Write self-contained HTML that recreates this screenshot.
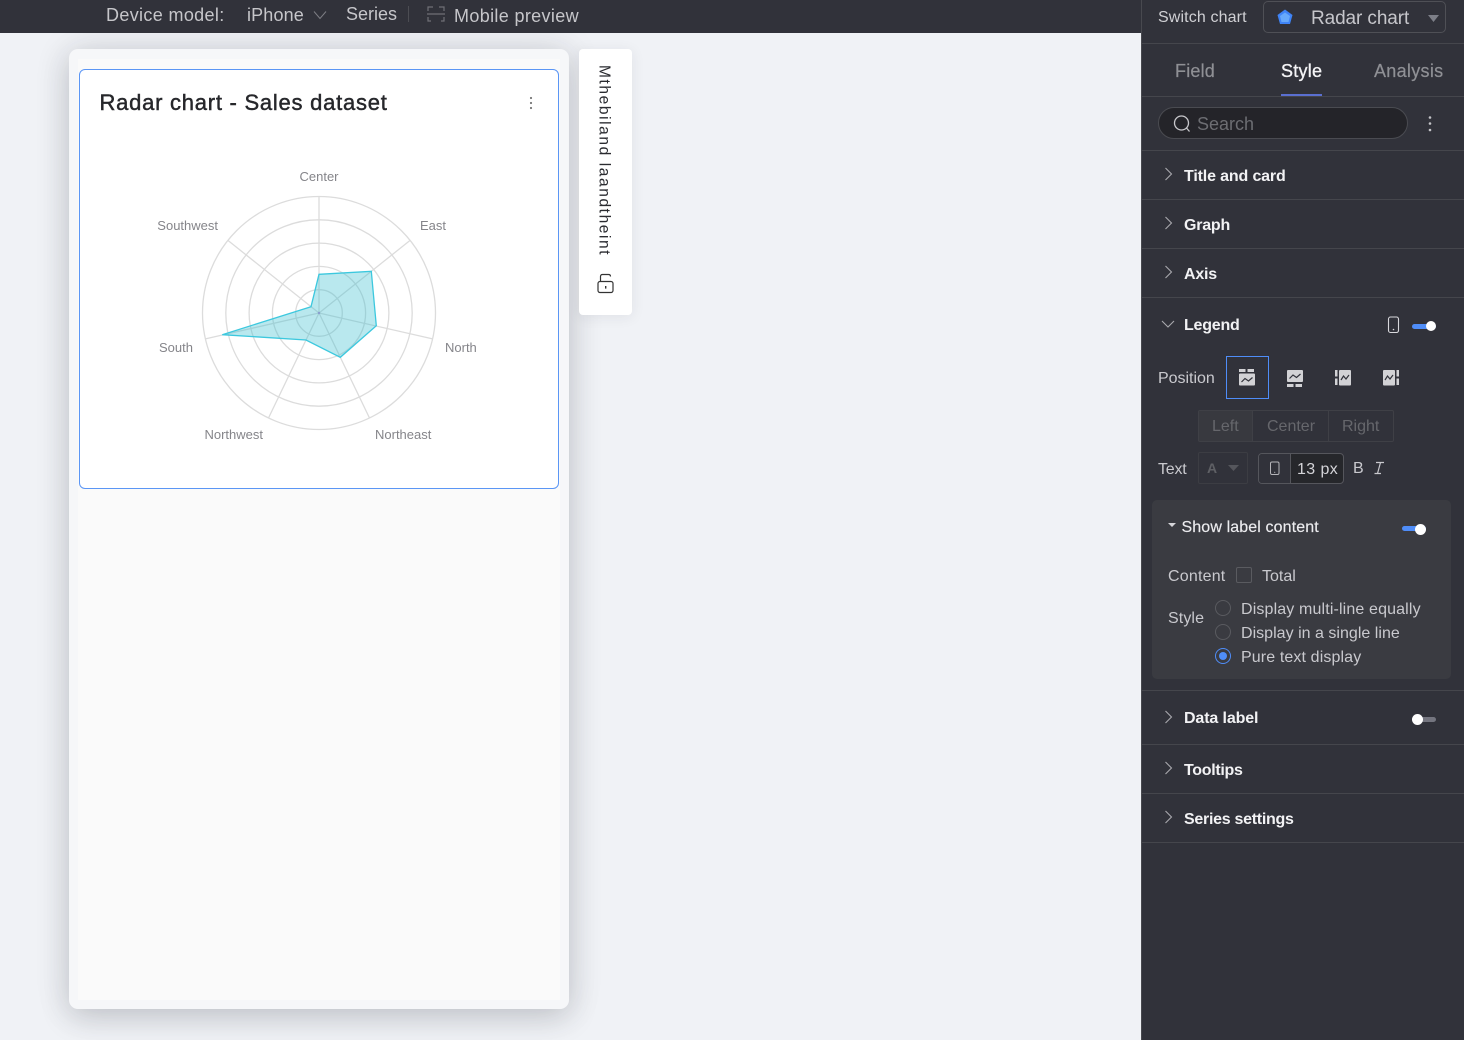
<!DOCTYPE html>
<html lang="en">
<head>
<meta charset="utf-8">
<title>Radar chart</title>
<style>
html,body{margin:0;padding:0;width:1464px;height:1040px;overflow:hidden;background:#f0f2f6;font-family:"Liberation Sans","Noto Sans CJK SC",sans-serif;}
*{box-sizing:border-box;}
.t{position:absolute;white-space:nowrap;line-height:20px;height:20px;}
.a{position:absolute;}
.h{color:#f2f2f4;font-size:16px;font-weight:bold;letter-spacing:-.22px;}
.l{color:#c9c9ce;font-size:16px;}
.line{position:absolute;left:1142px;width:322px;height:1px;background:#45464c;}
.chev{position:absolute;left:1161px;width:14px;height:14px;}
.rad{position:absolute;left:1215px;width:16px;height:16px;border:1px solid #5a5b60;border-radius:50%;}
</style>
</head>
<body>
<!-- phone frame -->
<div class="a" style="left:69px;top:49px;width:500px;height:960px;background:#f6f7f9;border-radius:9px;box-shadow:0 8px 30px rgba(40,44,55,.2),0 0 40px rgba(40,44,55,.09);"></div>
<div class="a" style="left:78px;top:59px;width:482px;height:941px;background:#fafafa;"></div>
<div class="a" style="left:79px;top:69px;width:480px;height:420px;background:#fff;border:1.5px solid #5b96f5;border-radius:6px;"></div>
<div class="t" style="left:99.5px;top:92px;font-size:22px;line-height:22px;height:22px;color:#26272b;-webkit-text-stroke:.45px #26272b;letter-spacing:.75px;">Radar chart - Sales dataset</div>
<svg class="a" style="left:527px;top:95px" width="8" height="16"><circle cx="4" cy="3" r="1.1" fill="#777"/><circle cx="4" cy="8" r="1.1" fill="#777"/><circle cx="4" cy="13" r="1.1" fill="#777"/></svg>

<!-- top bar -->
<div class="a" style="left:0;top:0;width:1142px;height:33px;background:#31323a;"></div>
<div class="t" style="left:106px;top:5px;font-size:18px;color:#c6c6ca;letter-spacing:.35px;">Device model:</div>
<div class="t" style="left:247px;top:5px;font-size:18px;color:#c6c6ca;letter-spacing:.15px;">iPhone</div>
<svg class="a" style="left:312px;top:8px" width="16" height="14"><path d="M2 3.5L8 10.5L14 3.5" fill="none" stroke="#7d7e84" stroke-width="1"/></svg>
<div class="t" style="left:346px;top:4px;font-size:18px;color:#c6c6ca;">Series</div>
<div class="a" style="left:408px;top:6px;width:1px;height:16px;background:#4c4d53;"></div>
<svg class="a" style="left:426px;top:5px" width="20" height="18"><path d="M2 6V2H7M13 2H18V6M1 9H19M2 12V16H5M15 16H18V12" fill="none" stroke="#6f7076" stroke-width="1.2"/></svg>
<div class="t" style="left:454px;top:6px;font-size:18px;color:#c6c6ca;letter-spacing:.35px;">Mobile preview</div>

<!-- radar -->
<svg class="a" style="left:140px;top:160px" width="350" height="290" viewBox="140 160 350 290">
<g fill="none" stroke="#dcdcdc" stroke-width="1.3">
<circle cx="319" cy="313" r="23.3"/><circle cx="319" cy="313" r="46.6"/><circle cx="319" cy="313" r="69.9"/><circle cx="319" cy="313" r="93.2"/><circle cx="319" cy="313" r="116.5"/>
<path d="M319 313L319 196.5M319 313L410.1 240.4M319 313L432.6 338.9M319 313L369.5 418M319 313L268.5 418M319 313L205.4 338.9M319 313L227.9 240.4"/>
</g>
<polygon points="319,274.3 371.3,271.3 376.3,325.7 340.3,357.3 306,340 222.3,334.7 311,306.7" fill="#37bccf" fill-opacity=".35" stroke="#3cc8de" stroke-width="1.3"/>
<circle cx="319" cy="313" r="1.2" fill="#8a9fd0"/>
<g font-family="Liberation Sans, sans-serif" font-size="13" fill="#85858a">
<text x="319" y="181" text-anchor="middle">Center</text>
<text x="420" y="230">East</text>
<text x="218" y="230" text-anchor="end">Southwest</text>
<text x="445" y="352">North</text>
<text x="193" y="352" text-anchor="end">South</text>
<text x="375" y="439">Northeast</text>
<text x="263" y="439" text-anchor="end">Northwest</text>
</g>
</svg>

<!-- side tab -->
<div class="a" style="left:579px;top:49px;width:53px;height:266px;background:#fff;border-radius:4px;box-shadow:0 2px 14px rgba(40,44,55,.08);"></div>
<div class="a" style="left:593.5px;top:65px;height:192px;width:20px;writing-mode:vertical-rl;font-size:15.5px;line-height:20px;color:#2a2b30;white-space:nowrap;letter-spacing:1.6px;">Mthebiland laandtheint</div>
<svg class="a" style="left:596px;top:273px" width="20" height="22"><path d="M4.500 8.500V3.500Q4.500 1.500 6.500 1.500H12.500Q14.500 1.500 14.500 3.500" fill="none" stroke="#333" stroke-width="1.2"/><rect x="2" y="8.500" width="15" height="11" rx="2" fill="none" stroke="#333" stroke-width="1.2"/><rect x="9" y="13" width="1.400" height="2.600" fill="#333"/></svg>

<!-- right panel -->
<div class="a" style="left:1141px;top:0;width:323px;height:1040px;background:#31323a;border-left:1px solid #48494f;"></div>
<div class="t" style="left:1158px;top:8px;font-size:16px;color:#d0d0d4;letter-spacing:.13px;">Switch chart</div>
<div class="a" style="left:1263px;top:1px;width:183px;height:32px;border:1px solid #4f5056;border-radius:5px;"></div>
<svg class="a" style="left:1276px;top:8px" width="18" height="18"><polygon points="9,1.500 16.500,7 14,16 4,16 1.500,7" fill="#3f84f7"/><polygon points="9,4.500 14,8 12.500,14 5.500,14 4,8" fill="#67a9fb"/></svg>
<div class="t" style="left:1311px;top:9px;font-size:19px;color:#c6c6cb;letter-spacing:-.1px;">Radar chart</div>
<svg class="a" style="left:1427px;top:14px" width="13" height="9"><polygon points="1,1 12,1 6.500,8" fill="#7d7f88"/></svg>
<div class="line" style="top:43px"></div>

<div class="t" style="left:1175px;top:61px;font-size:18px;color:#8f9095;-webkit-text-stroke:.2px #8f9095;letter-spacing:.2px;">Field</div>
<div class="t" style="left:1281px;top:61px;font-size:18px;color:#f4f4f6;-webkit-text-stroke:.3px #f4f4f6;letter-spacing:.25px;">Style</div>
<div class="a" style="left:1281px;top:94px;width:41px;height:2px;background:#5a6fd0;"></div>
<div class="t" style="left:1374px;top:61px;font-size:18px;color:#8f9095;-webkit-text-stroke:.2px #8f9095;letter-spacing:.3px;">Analysis</div>
<div class="line" style="top:96px"></div>

<div class="a" style="left:1158px;top:107px;width:250px;height:32px;background:#242429;border:1px solid #4a4b51;border-radius:16px;"></div>
<svg class="a" style="left:1172px;top:114px" width="20" height="20"><circle cx="9.500" cy="9" r="7" fill="none" stroke="#c8c8cc" stroke-width="1.3"/><path d="M14.500 14L17.500 17.500" stroke="#c8c8cc" stroke-width="1.3"/></svg>
<div class="t" style="left:1197px;top:113.500px;font-size:18px;color:#6c6d72;">Search</div>
<svg class="a" style="left:1426px;top:114px" width="8" height="20"><circle cx="4" cy="3.500" r="1.300" fill="#c4c4c8"/><circle cx="4" cy="9.500" r="1.300" fill="#c4c4c8"/><circle cx="4" cy="16" r="1.300" fill="#c4c4c8"/></svg>
<div class="line" style="top:150px"></div>

<svg class="chev" style="top:167px" viewBox="0 0 14 14"><path d="M4.500 1L10.500 7L4.500 13" fill="none" stroke="#a9a9ae" stroke-width="1.100"/></svg>
<div class="t h" style="left:1184px;top:166.500px;letter-spacing:-.15px;">Title and card</div>
<div class="line" style="top:199px"></div>
<svg class="chev" style="top:216px" viewBox="0 0 14 14"><path d="M4.500 1L10.500 7L4.500 13" fill="none" stroke="#a9a9ae" stroke-width="1.100"/></svg>
<div class="t h" style="left:1184px;top:215.500px;">Graph</div>
<div class="line" style="top:248px"></div>
<svg class="chev" style="top:265px" viewBox="0 0 14 14"><path d="M4.500 1L10.500 7L4.500 13" fill="none" stroke="#a9a9ae" stroke-width="1.100"/></svg>
<div class="t h" style="left:1184px;top:264.500px;">Axis</div>
<div class="line" style="top:297px"></div>

<svg class="chev" style="top:317px" viewBox="0 0 14 14"><path d="M1 4L7 10L13 4" fill="none" stroke="#a9a9ae" stroke-width="1.100"/></svg>
<div class="t h" style="left:1184px;top:315.500px;">Legend</div>
<svg class="a" style="left:1387px;top:316px" width="13" height="18"><rect x="1.500" y="1" width="10" height="15.500" rx="2" fill="none" stroke="#d8d8dc" stroke-width="1.100"/><circle cx="6.500" cy="13.500" r=".8" fill="#d8d8dc"/></svg>
<div class="a" style="left:1412px;top:324px;width:24px;height:5px;border-radius:3px;background:#4f8df8;"></div>
<div class="a" style="left:1426px;top:321px;width:10px;height:10px;border-radius:50%;background:#fff;"></div>

<div class="t l" style="left:1158px;top:368.500px;letter-spacing:-.02px;">Position</div>
<div class="a" style="left:1226px;top:356px;width:43px;height:43px;border:1.200px solid #4f8df8;"></div>
<svg class="a" style="left:1238px;top:368px" width="18" height="20"><rect x="1" y="1" width="6.500" height="3" fill="#d2d2d5"/><rect x="9.500" y="1" width="6.500" height="3" fill="#d2d2d5"/><rect x="1" y="5.500" width="16" height="12" rx="1" fill="#d2d2d5"/><path d="M3.500 14L7 10.500L10.500 13L14.500 9.500" fill="none" stroke="#31323a" stroke-width="1.200"/></svg>
<svg class="a" style="left:1286px;top:369px" width="18" height="20"><rect x="1" y="1" width="16" height="12" rx="1" fill="#d2d2d5"/><path d="M3.500 9.500L7 6L10.500 8.500L14.500 5" fill="none" stroke="#31323a" stroke-width="1.200"/><rect x="1" y="15" width="6.500" height="3" fill="#d2d2d5"/><rect x="9.500" y="15" width="6.500" height="3" fill="#d2d2d5"/></svg>
<svg class="a" style="left:1334px;top:369px" width="18" height="18"><rect x="1" y="1" width="2.500" height="6.500" fill="#d2d2d5"/><rect x="1" y="9.500" width="2.500" height="6.500" fill="#d2d2d5"/><rect x="5" y="1" width="12" height="15.500" rx="1" fill="#d2d2d5"/><path d="M7 11L9.500 7L12 10L15 6" fill="none" stroke="#31323a" stroke-width="1.200"/></svg>
<svg class="a" style="left:1382px;top:369px" width="18" height="18"><rect x="1" y="1" width="12" height="15.500" rx="1" fill="#d2d2d5"/><path d="M3 11L5.500 7L8 10L11 6" fill="none" stroke="#31323a" stroke-width="1.200"/><rect x="14.500" y="1" width="2.500" height="6.500" fill="#d2d2d5"/><rect x="14.500" y="9.500" width="2.500" height="6.500" fill="#d2d2d5"/></svg>

<div class="a" style="left:1198px;top:410px;width:196px;height:32px;border:1px solid #3f4046;border-radius:2px;"></div>
<div class="a" style="left:1199px;top:411px;width:54px;height:30px;background:#38393f;border-right:1px solid #3f4046;"></div>
<div class="a" style="left:1328px;top:411px;width:1px;height:30px;background:#3f4046;"></div>
<div class="t" style="left:1212px;top:417px;font-size:16px;color:#66676c;">Left</div>
<div class="t" style="left:1267px;top:417px;font-size:16px;color:#66676c;">Center</div>
<div class="t" style="left:1342px;top:417px;font-size:16px;color:#66676c;">Right</div>

<div class="t l" style="left:1158px;top:459.500px;letter-spacing:-.2px;">Text</div>
<div class="a" style="left:1198px;top:452px;width:50px;height:32px;border:1px solid #3c3d43;border-radius:2px;"></div>
<div class="t" style="left:1207px;top:458px;font-size:14px;font-weight:bold;color:#5f6065;">A</div>
<svg class="a" style="left:1227px;top:464px" width="13" height="8"><polygon points="1,1 12,1 6.500,7" fill="#55565c"/></svg>
<div class="a" style="left:1258px;top:453px;width:86px;height:31px;border:1px solid #55565c;border-radius:4px;background:#26272b;"></div>
<div class="a" style="left:1259px;top:454px;width:32px;height:29px;background:#31323a;border-right:1px solid #55565c;border-radius:3px 0 0 3px;"></div>
<svg class="a" style="left:1269px;top:461px" width="12" height="15"><rect x="1.500" y="1" width="8.500" height="12.500" rx="1.500" fill="none" stroke="#b5b5b9" stroke-width="1"/><circle cx="5.700" cy="11.300" r=".6" fill="#b5b5b9"/></svg>
<div class="t" style="left:1297px;top:459.500px;font-size:16px;color:#d4d4d8;letter-spacing:.4px;">13 px</div>
<div class="t" style="left:1353px;top:458.500px;font-size:16px;color:#c9c9ce;">B</div>
<svg class="a" style="left:1373px;top:461px" width="12" height="14"><path d="M3 1.500H11M7.500 1.500L4.500 12.500M1.500 12.500H8" fill="none" stroke="#c9c9ce" stroke-width="1.200"/></svg>

<!-- nested box -->
<div class="a" style="left:1152px;top:500px;width:299px;height:179px;background:#3a3b41;border-radius:5px;"></div>
<svg class="a" style="left:1167px;top:522px" width="10" height="6"><polygon points="1,1 9,1 5,5" fill="#d6d6da"/></svg>
<div class="t" style="left:1181.500px;top:518px;font-size:16px;color:#ececef;-webkit-text-stroke:.15px #ececef;letter-spacing:.12px;">Show label content</div>
<div class="a" style="left:1402px;top:526px;width:24px;height:5px;border-radius:3px;background:#4f8df8;"></div>
<div class="a" style="left:1415px;top:523.500px;width:11px;height:11px;border-radius:50%;background:#fff;"></div>
<div class="t l" style="left:1168px;top:566.500px;letter-spacing:.2px;">Content</div>
<div class="a" style="left:1236px;top:567px;width:16px;height:16px;border:1px solid #5a5b60;border-radius:2px;"></div>
<div class="t l" style="left:1262px;top:566.500px;">Total</div>
<div class="t l" style="left:1168px;top:608.500px;letter-spacing:.1px;">Style</div>
<div class="rad" style="top:600px"></div>
<div class="t l" style="left:1241px;top:599.500px;letter-spacing:.14px;">Display multi-line equally</div>
<div class="rad" style="top:624px"></div>
<div class="t l" style="left:1241px;top:623.500px;letter-spacing:.02px;">Display in a single line</div>
<div class="rad" style="top:648px;border-color:#4f8df8;"></div>
<div class="a" style="left:1219px;top:652px;width:8px;height:8px;border-radius:50%;background:#4f8df8;"></div>
<div class="t l" style="left:1241px;top:647.500px;letter-spacing:.12px;">Pure text display</div>
<div class="line" style="top:690px"></div>

<svg class="chev" style="top:710px" viewBox="0 0 14 14"><path d="M4.500 1L10.500 7L4.500 13" fill="none" stroke="#a9a9ae" stroke-width="1.100"/></svg>
<div class="t h" style="left:1184px;top:708.500px;letter-spacing:-.12px;">Data label</div>
<div class="a" style="left:1412px;top:717px;width:24px;height:5px;border-radius:3px;background:#74757f;"></div>
<div class="a" style="left:1412px;top:714px;width:11px;height:11px;border-radius:50%;background:#fff;"></div>
<div class="line" style="top:744px"></div>
<svg class="chev" style="top:761px" viewBox="0 0 14 14"><path d="M4.500 1L10.500 7L4.500 13" fill="none" stroke="#a9a9ae" stroke-width="1.100"/></svg>
<div class="t h" style="left:1184px;top:760.500px;letter-spacing:-.3px;">Tooltips</div>
<div class="line" style="top:793px"></div>
<svg class="chev" style="top:810px" viewBox="0 0 14 14"><path d="M4.500 1L10.500 7L4.500 13" fill="none" stroke="#a9a9ae" stroke-width="1.100"/></svg>
<div class="t h" style="left:1184px;top:809.500px;letter-spacing:-.28px;">Series settings</div>
<div class="line" style="top:842px"></div>
</body>
</html>
